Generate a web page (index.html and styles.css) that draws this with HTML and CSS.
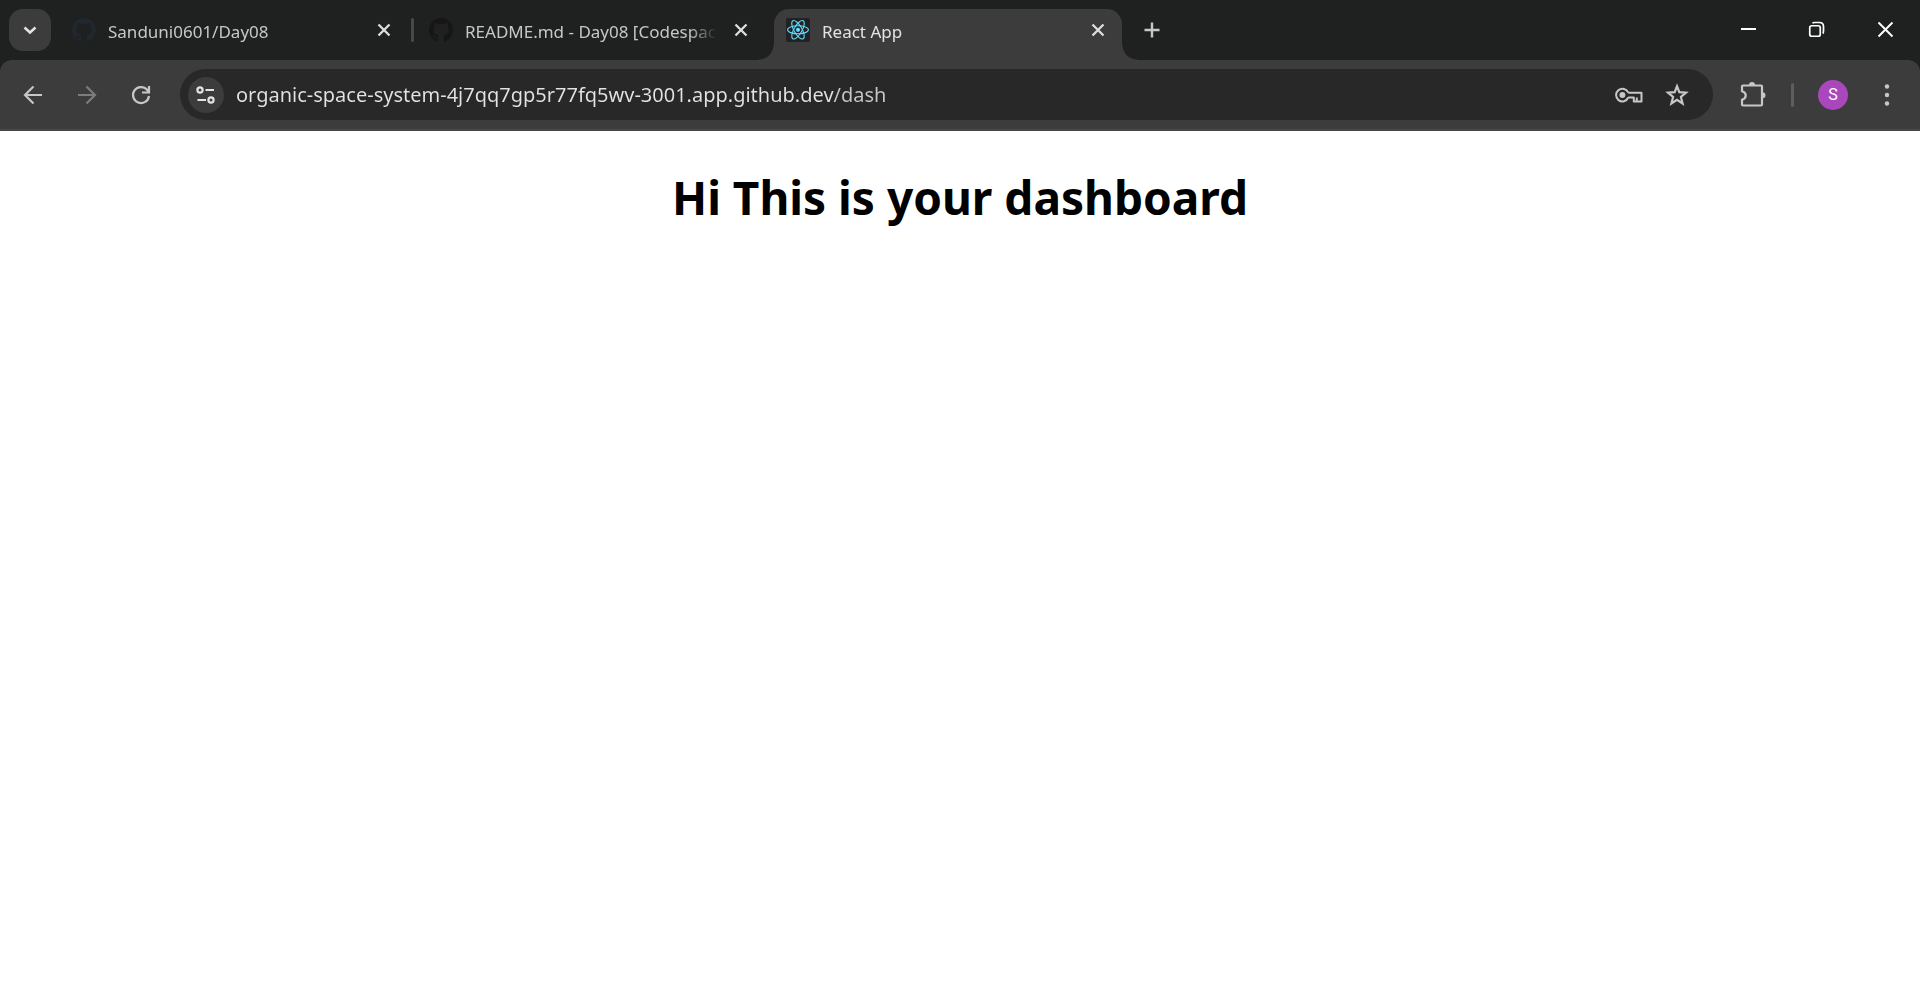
FILE: index.html
```html
<!DOCTYPE html>
<html lang="en">
<head>
<meta charset="utf-8">
<meta name="viewport" content="width=device-width, initial-scale=1">
<title>React App</title>
<link rel="stylesheet" href="styles.css">
</head>
<body>
<svg class="defs" aria-hidden="true">
  <symbol id="github" viewBox="0 0 16 16"><path fill="currentColor" d="M8 0C3.58 0 0 3.58 0 8c0 3.54 2.29 6.53 5.47 7.59.4.07.55-.17.55-.38 0-.19-.01-.82-.01-1.49-2.01.37-2.53-.49-2.69-.94-.09-.23-.48-.94-.82-1.13-.28-.15-.68-.52-.01-.53.63-.01 1.08.58 1.23.82.72 1.21 1.87.87 2.33.66.07-.52.28-.87.51-1.07-1.78-.2-3.64-.89-3.64-3.95 0-.87.31-1.59.82-2.15-.08-.2-.36-1.02.08-2.12 0 0 .67-.21 2.2.82.64-.18 1.32-.27 2-.27s1.36.09 2 .27c1.53-1.04 2.2-.82 2.2-.82.44 1.1.16 1.92.08 2.12.51.56.82 1.27.82 2.15 0 3.07-1.87 3.75-3.65 3.95.29.25.54.73.54 1.48 0 1.07-.01 1.93-.01 2.2 0 .21.15.46.55.38A8.01 8.01 0 0 0 16 8c0-4.42-3.58-8-8-8z"/></symbol>
  <symbol id="close" viewBox="0 0 24 24"><path d="M6.500 6.500 17.500 17.500M17.500 6.500 6.500 17.500" fill="none" stroke="currentColor" stroke-width="2.300"/></symbol>
</svg>

<header>
  <div class="tabstrip">
    <button class="tab-search" aria-label="Search tabs">
      <svg class="icon" viewBox="0 0 24 24"><path d="m6.500 9.500 5.500 5 5.500-5" fill="none" stroke="currentColor" stroke-width="2.500"/></svg>
    </button>
    <nav class="tabs" aria-label="Tabs">
      <div class="tab">
        <svg class="icon fav-slate"><use href="#github"/></svg>
        <button class="tab-title">Sanduni0601/Day08</button>
        <button class="tab-close" aria-label="Close tab"><svg class="icon"><use href="#close"/></svg></button>
      </div>
      <span class="separator"></span>
      <div class="tab">
        <svg class="icon fav-dark"><use href="#github"/></svg>
        <button class="tab-title">README.md - Day08 [Codespac</button>
        <button class="tab-close" aria-label="Close tab"><svg class="icon"><use href="#close"/></svg></button>
      </div>
      <span class="separator hidden"></span>
      <div class="tab active">
        <svg class="icon" viewBox="0 0 24 24">
          <rect width="24" height="24" rx="2" fill="#222"/>
          <g fill="none" stroke="#61dafb" stroke-width="1.100">
            <ellipse cx="12" cy="11.800" rx="10.400" ry="4"/>
            <ellipse cx="12" cy="11.800" rx="10.400" ry="4" transform="rotate(60 12 11.800)"/>
            <ellipse cx="12" cy="11.800" rx="10.400" ry="4" transform="rotate(120 12 11.800)"/>
          </g>
          <circle cx="12" cy="11.800" r="2.100" fill="#61dafb"/>
        </svg>
        <button class="tab-title">React App</button>
        <button class="tab-close" aria-label="Close tab"><svg class="icon"><use href="#close"/></svg></button>
      </div>
    </nav>
    <button class="new-tab" aria-label="New tab">
      <svg class="icon" viewBox="0 0 24 24"><path d="M12 4.500v15M4.500 12h15" stroke="currentColor" stroke-width="2.400"/></svg>
    </button>
    <div class="window-controls">
      <button aria-label="Minimize"><svg class="icon" viewBox="0 0 24 24"><path d="M3 11h15" stroke="currentColor" stroke-width="2"/></svg></button>
      <button aria-label="Restore"><svg class="icon" viewBox="0 0 24 24" fill="none" stroke="currentColor" stroke-width="1.700"><rect x="3.750" y="7.750" width="10.500" height="10.500" rx="2"/><path d="M6.500 5.300q.6-.8 2-.8h5q4 0 4 4V13q0 2-.8 2.500"/></svg></button>
      <button aria-label="Close window"><svg class="icon" viewBox="0 0 24 24"><path d="m4.500 4.500 14 14m0-14-14 14" stroke="currentColor" stroke-width="1.900"/></svg></button>
    </div>
  </div>

  <div class="toolbar">
    <button class="tool" aria-label="Back"><svg class="icon" viewBox="0 0 24 24"><path d="M21 12H4M12.500 3.500 4 12l8.500 8.500" fill="none" stroke="currentColor" stroke-width="2.200"/></svg></button>
    <button class="tool" aria-label="Forward" disabled><svg class="icon" viewBox="0 0 24 24"><path d="M3 12h17M11.500 3.500 20 12l-8.500 8.500" fill="none" stroke="currentColor" stroke-width="2.200"/></svg></button>
    <button class="tool" aria-label="Reload"><svg class="icon" viewBox="0 0 24 24"><path d="M20 13a8 8 0 1 1-1.900-6.200L20 9M20 3v6.500h-7" fill="none" stroke="currentColor" stroke-width="2.200"/></svg></button>
    <form class="omnibox">
      <button class="site-info" type="button" aria-label="View site information">
        <svg class="icon" viewBox="0 0 24 24" fill="none" stroke="currentColor" stroke-width="2.200"><circle cx="6" cy="7" r="2.600"/><path d="M11.500 7H20M3.500 17H12"/><circle cx="17" cy="17" r="2.600"/></svg>
      </button>
      <input class="url" type="text" aria-label="Address" spellcheck="false" value="organic-space-system-4j7qq7gp5r77fq5wv-3001.app.github.dev/dash">
      <button class="page-action" type="button" aria-label="Passwords">
        <svg class="key" viewBox="0 0 30 24"><path d="M14.200 9.700H27.500v8.800H22.800V14.500M14.200 14.500H19.800v4H24M14.200 9.700a6.300 6.300 0 1 0 0 4.800" fill="none" stroke="currentColor" stroke-width="2" stroke-linejoin="round"/><circle cx="8.400" cy="12" r="3" fill="currentColor"/></svg>
      </button>
      <button class="page-action" type="button" aria-label="Bookmark this page">
        <svg class="icon" viewBox="0 0 24 24"><path d="m12 3.200 2.300 6 6.700.5-5.100 4.200 1.700 6.600-5.600-3.600-5.600 3.600 1.700-6.600L3 9.700l6.700-.5z" fill="none" stroke="currentColor" stroke-width="2.200"/></svg>
      </button>
    </form>
    <button class="tool" aria-label="Extensions">
      <svg class="icon large" viewBox="0 0 28 28"><path d="M4 5.500q0-1 1-1h18q1 0 1 1v18q0 1-1 1H5q-1 0-1-1v-4.700c5-1.500 5-7.100 0-8.600z" fill="none" stroke="currentColor" stroke-width="2.200"/><path d="M11 4a3 3 0 0 1 6 0zM24.500 11.300a3 3 0 0 1 0 6z" fill="currentColor"/></svg>
    </button>
    <span class="separator"></span>
    <button class="tool" aria-label="Profile"><span class="avatar">S</span></button>
    <button class="tool" aria-label="Menu"><svg class="icon" viewBox="0 0 24 24" fill="currentColor"><circle cx="12" cy="3.500" r="2.200"/><circle cx="12" cy="12" r="2.200"/><circle cx="12" cy="20.500" r="2.200"/></svg></button>
  </div>
</header>

<main>
  <h1>Hi This is your dashboard</h1>
</main>
</body>
</html>
```
FILE: styles.css
```css
* { box-sizing: border-box; }

body {
  margin: 0;
  background: #fff;
  color: #000;
  font-family: "Segoe UI", "Noto Sans", "Open Sans", sans-serif;
}

button {
  display: flex;
  align-items: center;
  justify-content: center;
  flex: none;
  padding: 0;
  border: 0;
  background: none;
  color: inherit;
  font: inherit;
}

.defs { display: none; }
.icon { flex: none; width: 24px; height: 24px; }
.icon.large { width: 28px; height: 28px; }

header { background: #1f2120; color: #c7c7c7; }

.tabstrip {
  display: flex;
  align-items: center;
  height: 60px;
  padding-left: 9px;
}

.tab-search {
  width: 42px;
  height: 42px;
  border-radius: 14px;
  background: #3c3c3c;
  color: #e3e3e3;
}

.tabs {
  display: flex;
  align-items: center;
  flex: 0 1 1062px;
  min-width: 0;
  height: 100%;
  margin-left: 9px;
}

.tab {
  display: flex;
  align-items: center;
  flex: 1;
  min-width: 0;
  height: 42px;
  padding: 0 12px;
  font-size: 17px;
}

.tab-title {
  display: block;
  flex: 1;
  min-width: 0;
  margin: 0 12px;
  padding-top: 3px;
  overflow: hidden;
  white-space: nowrap;
  text-align: left;
  line-height: 24px;
  mask-image: linear-gradient(to right, #000 calc(100% - 28px), transparent);
}
.tab-close { width: 24px; height: 24px; color: #dedede; }

.tab.active {
  position: relative;
  align-self: flex-end;
  height: 51px;
  padding-bottom: 9px;
  border-radius: 15px 15px 0 0;
  background: #3c3c3c;
  color: #e3e3e3;
}
.tab.active::before,
.tab.active::after {
  content: "";
  position: absolute;
  bottom: 0;
  width: 15px;
  height: 15px;
}
.tab.active::before {
  right: 100%;
  background: radial-gradient(circle at 0 0, transparent 14px, #3c3c3c 15px);
}
.tab.active::after {
  left: 100%;
  background: radial-gradient(circle at 100% 0, transparent 14px, #3c3c3c 15px);
}

.separator {
  flex: none;
  width: 3px;
  height: 24px;
  margin: 0 3px;
  border-radius: 2px;
  background: #484848;
}
.separator.hidden { visibility: hidden; }

.fav-slate { color: #20272d; }
.fav-dark { color: #171515; }

.new-tab { width: 42px; height: 42px; margin-left: 9px; }

.window-controls {
  display: flex;
  margin-left: auto;
  color: #fff;
}
.window-controls button { width: 68px; height: 60px; }

.toolbar {
  display: flex;
  align-items: center;
  height: 71px;
  padding: 0 6px;
  border-bottom: 2px solid #474747;
  border-radius: 12px 12px 0 0;
  background: #3c3c3c;
}

.tool { width: 54px; height: 51px; }
.tool:disabled { color: #7c7c7c; }

.omnibox {
  display: flex;
  align-items: center;
  flex: 1;
  min-width: 0;
  height: 51px;
  margin: 0 12px;
  padding: 0 12px 0 8px;
  border-radius: 26px;
  background: #282828;
}

.site-info {
  width: 36px;
  height: 36px;
  border-radius: 50%;
  background: #3c3c3c;
  color: #e3e3e3;
}

/* The host is drawn brighter than the path that follows it. */
.url {
  flex: 1;
  min-width: 0;
  margin: 0 12px;
  padding: 0;
  border: 0;
  outline: 0;
  background: linear-gradient(to right, #e3e3e3 597px, #c7c7c7 597px);
  background-clip: text;
  color: transparent;
  font: inherit;
  font-size: 20px;
  line-height: 30px;
}

.page-action { width: 48px; height: 48px; }
.key { width: 30px; height: 24px; }

.toolbar .separator { margin: 0 12px; background: #5e5e5e; }

.avatar {
  width: 30px;
  border-radius: 50%;
  background: #ab47bc;
  color: #fff;
  font-family: Roboto, sans-serif;
  font-size: 16px;
  line-height: 30px;
}

main { padding: 34px 8px; text-align: center; }

h1 {
  margin: 0;
  font-size: 46px;
  line-height: 64px;
}
```
